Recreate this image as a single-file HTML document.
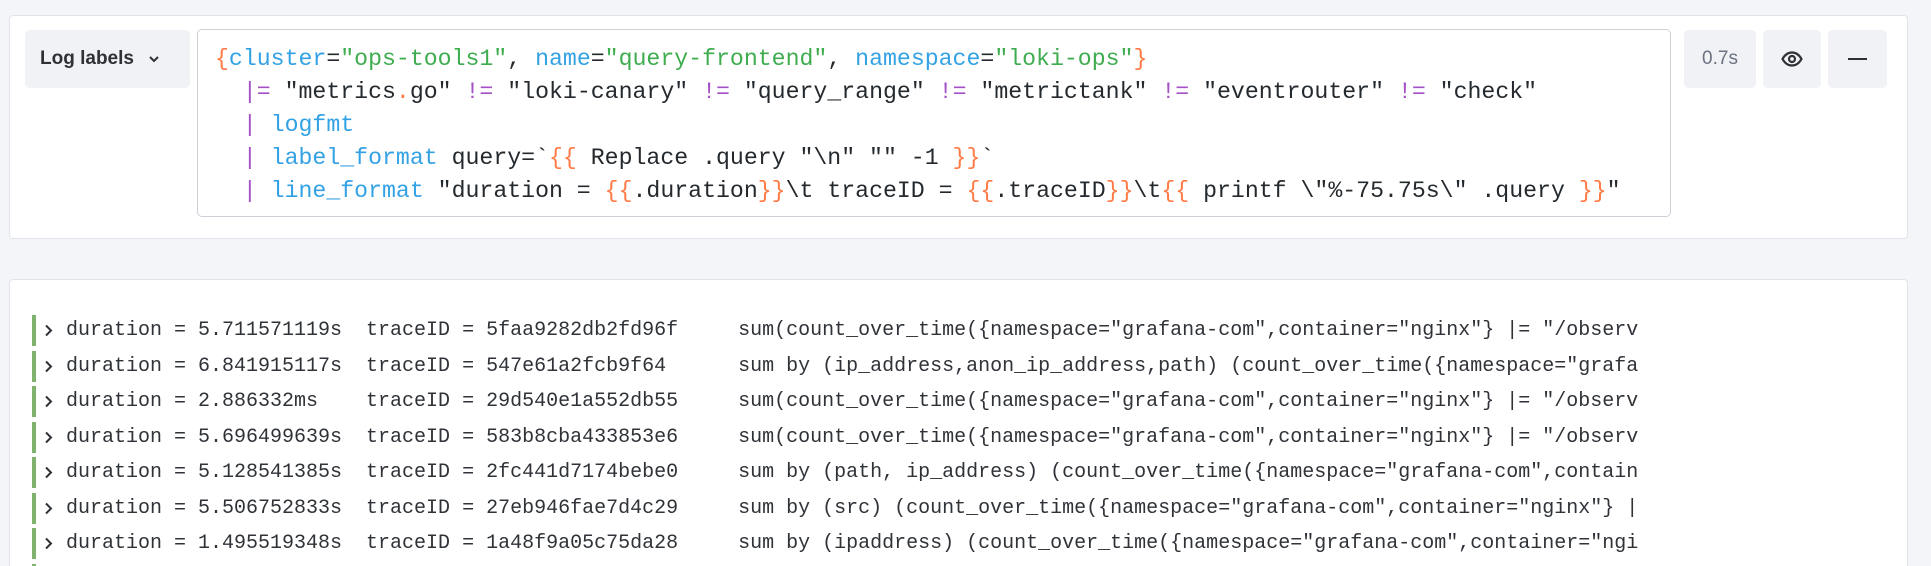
<!DOCTYPE html>
<html><head><meta charset="utf-8"><style>
*{margin:0;padding:0;box-sizing:border-box}
html,body{width:1931px;height:566px;overflow:hidden}
body{background:#f4f5f8;font-family:"Liberation Sans",sans-serif;color:#24292e}
#wrap{position:relative;width:1931px;height:566px;overflow:hidden}
.panel{position:absolute;background:#fff;border:1px solid #e1e4e9;border-radius:4px}
.btn{position:absolute;background:#f0f2f6;border-radius:5px;top:30px;height:58px;display:flex;align-items:center;justify-content:center}
.ed{position:absolute;left:197px;top:29px;width:1474px;height:188px;border:1px solid #ccd1d8;border-radius:5px;background:#fff}
.code{position:absolute;left:17px;top:13px;font-family:"Liberation Mono",monospace;font-size:23.2px;line-height:33px;white-space:pre;color:#24292e}
.o{color:#ff7a45}.b{color:#33a2e5}.g{color:#3fad4f}.p{color:#a451c6}
.row{position:absolute;left:32px;height:31px;width:1620px;white-space:pre;font-family:"Liberation Mono",monospace;font-size:20px;line-height:31px;color:#2f3338}
.row::before{content:"";position:absolute;left:0;top:0;width:4px;height:31px;background:#7eb26d}
.row span.t{position:absolute;left:34px;top:0}
.row svg{position:absolute;left:12px;top:9px}
</style></head><body><div id="wrap">
<div class="panel" style="left:9px;top:15px;width:1899px;height:224px"></div>
<div class="btn" style="left:25px;width:165px;justify-content:flex-start;padding-left:15px;font-size:19px;font-weight:bold;color:#2e3136">Log labels<svg style="margin-left:14px" width="12" height="8" viewBox="0 0 12 8"><path d="M2 2l4 4 4-4" fill="none" stroke="#2e3136" stroke-width="2"/></svg></div>
<div class="ed"><div class="code"><span class="o">{</span><span class="b">cluster</span>=<span class="g">"ops-tools1"</span>, <span class="b">name</span>=<span class="g">"query-frontend"</span>, <span class="b">namespace</span>=<span class="g">"loki-ops"</span><span class="o">}</span>
  <span class="p">|=</span> "metrics<span class="o">.</span>go" <span class="p">!=</span> "loki-canary" <span class="p">!=</span> "query_range" <span class="p">!=</span> "metrictank" <span class="p">!=</span> "eventrouter" <span class="p">!=</span> "check"
  <span class="p">|</span> <span class="b">logfmt</span>
  <span class="p">|</span> <span class="b">label_format</span> query=`<span class="o">{{</span> Replace .query "\n" "" -1 <span class="o">}}</span>`
  <span class="p">|</span> <span class="b">line_format</span> "duration = <span class="o">{{</span>.duration<span class="o">}}</span>\t traceID = <span class="o">{{</span>.traceID<span class="o">}}</span>\t<span class="o">{{</span> printf \"%-75.75s\" .query <span class="o">}}</span>"</div></div>
<div class="btn" style="left:1684px;width:72px;font-size:19px;color:#6b7280">0.7s</div>
<div class="btn" style="left:1763px;width:58px"><svg width="22" height="16" viewBox="0 0 22 16"><path d="M1.5 8C4 3.5 7.5 1.5 11 1.5S18 3.5 20.5 8C18 12.5 14.5 14.5 11 14.5S4 12.5 1.5 8Z" fill="none" stroke="#2e3136" stroke-width="2.2"/><circle cx="11" cy="8" r="3" fill="none" stroke="#2e3136" stroke-width="2.2"/></svg></div>
<div class="btn" style="left:1828px;width:59px"><div style="width:19px;height:2.5px;background:#2e3136"></div></div>
<div class="panel" style="left:9px;top:279px;width:1899px;height:287px;border-bottom:none;border-radius:4px 4px 0 0"></div>
<div class="row" style="top:315px"><svg width="9" height="13" viewBox="0 0 9 13"><path d="M2 1.5l5 5-5 5" fill="none" stroke="#2f3338" stroke-width="2"/></svg><span class="t">duration = 5.711571119s  traceID = 5faa9282db2fd96f     sum(count_over_time({namespace="grafana-com",container="nginx"} |= "/observ</span></div>
<div class="row" style="top:351px"><svg width="9" height="13" viewBox="0 0 9 13"><path d="M2 1.5l5 5-5 5" fill="none" stroke="#2f3338" stroke-width="2"/></svg><span class="t">duration = 6.841915117s  traceID = 547e61a2fcb9f64      sum by (ip_address,anon_ip_address,path) (count_over_time({namespace="grafa</span></div>
<div class="row" style="top:386px"><svg width="9" height="13" viewBox="0 0 9 13"><path d="M2 1.5l5 5-5 5" fill="none" stroke="#2f3338" stroke-width="2"/></svg><span class="t">duration = 2.886332ms    traceID = 29d540e1a552db55     sum(count_over_time({namespace="grafana-com",container="nginx"} |= "/observ</span></div>
<div class="row" style="top:422px"><svg width="9" height="13" viewBox="0 0 9 13"><path d="M2 1.5l5 5-5 5" fill="none" stroke="#2f3338" stroke-width="2"/></svg><span class="t">duration = 5.696499639s  traceID = 583b8cba433853e6     sum(count_over_time({namespace="grafana-com",container="nginx"} |= "/observ</span></div>
<div class="row" style="top:457px"><svg width="9" height="13" viewBox="0 0 9 13"><path d="M2 1.5l5 5-5 5" fill="none" stroke="#2f3338" stroke-width="2"/></svg><span class="t">duration = 5.128541385s  traceID = 2fc441d7174bebe0     sum by (path, ip_address) (count_over_time({namespace="grafana-com",contain</span></div>
<div class="row" style="top:493px"><svg width="9" height="13" viewBox="0 0 9 13"><path d="M2 1.5l5 5-5 5" fill="none" stroke="#2f3338" stroke-width="2"/></svg><span class="t">duration = 5.506752833s  traceID = 27eb946fae7d4c29     sum by (src) (count_over_time({namespace="grafana-com",container="nginx"} |</span></div>
<div class="row" style="top:528px"><svg width="9" height="13" viewBox="0 0 9 13"><path d="M2 1.5l5 5-5 5" fill="none" stroke="#2f3338" stroke-width="2"/></svg><span class="t">duration = 1.495519348s  traceID = 1a48f9a05c75da28     sum by (ipaddress) (count_over_time({namespace="grafana-com",container="ngi</span></div>
<div style="position:absolute;left:32px;top:564px;width:4px;height:2px;background:#7eb26d"></div>
</div></body></html>
